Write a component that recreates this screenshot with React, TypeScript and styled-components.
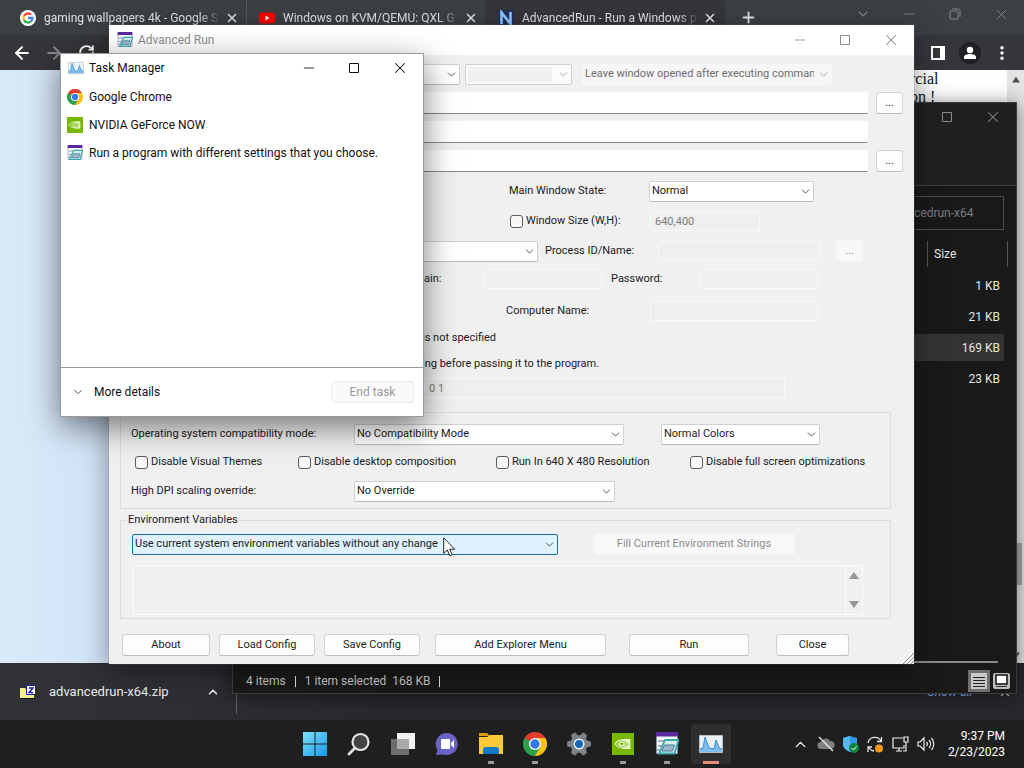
import React from "react";
import styled, { createGlobalStyle, css } from "styled-components";
import { ArrowLeft, ArrowRight, ChevronDown, ChevronUp, Minus, MoreVertical, Plus, RotateCw, X } from "lucide-react";

const ui = `Roboto, "Open Sans", sans-serif`;

const Global = createGlobalStyle`
  * { box-sizing: border-box; }
  body { margin: 0; font-family: ${ui}; font-size: 12px; }
  button, input, select, textarea { font: inherit; color: inherit; margin: 0; }
  button { padding: 0; background: none; border: 0; }
`;

/* ---------- desktop and browser ---------- */
const Desktop = styled.main`
  position: relative;
  display: flex;
  flex-direction: column;
  height: 100vh;
  min-height: 720px;
  overflow: hidden;
  background: #202124;
`;
const Browser = styled.section`
  flex: 1;
  display: flex;
  flex-direction: column;
  color: #dfe1e5;
`;
const TabStrip = styled.div`
  display: flex;
  height: 35px;
  padding-left: 8px;
  background: #3c4043;
`;
const Tab = styled.div<{ $active?: boolean }>`
  display: flex;
  align-items: center;
  flex: 0 1 239px;
  min-width: 0;
  gap: 8px;
  padding: 0 7px 0 12px;
  background: ${(p) => (p.$active ? "#35363a" : "transparent")};
  & + &:nth-child(2) { box-shadow: -1px 0 0 -0px #55585b; }
`;
const TabTitle = styled.span`
  flex: 1;
  margin-right: -5px;
  overflow: hidden;
  white-space: nowrap;
  mask-image: linear-gradient(to right, #000 88%, transparent);
`;
const IconButton = styled.button<{ $w?: number }>`
  display: flex;
  align-items: center;
  justify-content: center;
  flex: none;
  width: ${(p) => p.$w ?? 16}px;
  align-self: stretch;
`;
const Spacer = styled.div`
  flex: 1;
`;
const WindowButtons = styled.div<{ $color: string }>`
  display: flex;
  height: 28px;
  color: ${(p) => p.$color};
`;
const Toolbar = styled.div`
  display: flex;
  height: 35px;
  padding: 0 6px;
  background: #35363a;
  color: #fff;
`;
const Page = styled.div`
  flex: 1;
  display: flex;
  justify-content: flex-end;
  background: linear-gradient(to right, #dbeafa, #cfe1f5 130px, #fff 131px);
`;
const Article = styled.p`
  width: 97px;
  margin: 0;
  color: #111;
  font: 16px/18px "Liberation Serif", serif;
`;
const PageScroll = styled.div`
  display: flex;
  flex-direction: column;
  align-items: center;
  width: 17px;
  padding: 6px 0 4px;
  background: #e4e4e4;
  color: #505050;
`;
const PageThumb = styled.div`
  width: 13px;
  height: 42px;
  margin-top: auto;
  margin-bottom: 66px;
  background: #a8a8a8;
`;
const Shelf = styled.div`
  display: flex;
  align-items: center;
  height: 57px;
  background: linear-gradient(to right, #323338, #27292d 400px);
`;
const Download = styled.button`
  display: flex;
  align-items: center;
  width: 237px;
  height: 44px;
  padding: 0 16px 0 20px;
  gap: 13px;
  border-right: 1px solid #5f6368;
  font-size: 13px;
  color: #e8eaed;
`;
const ShowAll = styled.a`
  margin-right: 14px;
  color: #8ab4f8;
  text-decoration: none;
`;

/* ---------- floating windows ---------- */
const Frame = styled.section`
  position: absolute;
  display: flex;
  flex-direction: column;
`;
const Explorer = styled(Frame)`
  left: 232px;
  top: 102px;
  width: 785px;
  height: 592px;
  background: #191919;
  border: 1px solid #3c3c3c;
  color: #e6e6e6;
  box-shadow: 0 2px 18px rgba(0, 0, 0, 0.5);
`;
const ExplorerTop = styled.div`
  display: flex;
  justify-content: flex-end;
  height: 83px;
  background: #202020;
  border-bottom: 1px solid #3f3f3f;
`;
const SearchBox = styled.input`
  align-self: flex-end;
  width: 130px;
  height: 34px;
  margin: 10px 12px 0 0;
  padding: 0 0 0 39px;
  border: 1px solid #4c4c4c;
  background: #191919;
  &::placeholder { color: #7c7c7c; opacity: 1; }
`;
const Files = styled.table`
  align-self: flex-end;
  width: 111px;
  margin: 11px 8px 0 0;
  border-spacing: 0;
  th {
    height: 26px;
    padding: 0 0 0 6px;
    border: solid #555;
    border-width: 0 1px;
    font-weight: 400;
    text-align: left;
  }
  th:first-child, td:first-child { width: 30px; border: 0; padding: 0; }
  tbody::before { content: ""; display: block; height: 3px; }
  td { height: 31px; padding: 0 8px 0 0; text-align: right; }
`;
const FileRow = styled.tr<{ $on?: boolean }>`
  td { background: ${(p) => (p.$on ? "linear-gradient(#333, #333) 0 2px / 100% 27px no-repeat" : "none")}; }
  td:last-child { background-size: calc(100% - 4px) 27px; }
`;
const ScrollLine = styled.div`
  height: 2px;
  margin: auto 18px 6px 0;
  background: #8a8a8a;
`;
const StatusBar = styled.footer`
  display: flex;
  align-items: center;
  height: 24px;
  padding: 0 6px 0 13px;
  gap: 9px;
  color: #c4c4c4;
`;
const Tick = styled.i`
  width: 1px;
  height: 11px;
  background: #e0e0e0;
`;
const ViewButtons = styled.div`
  display: flex;
  margin-left: auto;
  gap: 3px;
`;
const TitleBar = styled.header<{ $h: number; $color: string }>`
  display: flex;
  align-items: center;
  height: ${(p) => p.$h}px;
  padding-left: 8px;
  gap: 5px;
  background: #fff;
  color: ${(p) => p.$color};
  h2 { flex: 1; margin: 0; font-size: 12px; font-weight: 400; }
`;

/* ---------- Advanced Run dialog ---------- */
const RunWindow = styled(Frame)`
  left: 109px;
  top: 25px;
  width: 805px;
  background: #f0f0f0;
  color: #1a1a1a;
  box-shadow: 0 0 1px #777, 0 6px 26px rgba(0, 0, 0, 0.4);
`;
const Form = styled.form`
  position: relative;
  padding-bottom: 8px;
  font-size: 11px;
  line-height: 14px;
`;
const Row = styled.div<{ $h?: number; $mt?: number; $pl?: number }>`
  display: flex;
  align-items: center;
  height: ${(p) => p.$h ?? 22}px;
  margin-top: ${(p) => p.$mt ?? 7}px;
  padding-left: ${(p) => p.$pl ?? 0}px;
`;
type Slot = { $w?: number; $ml?: number };
const slot = css<Slot>`
  flex: none;
  width: ${(p) => (p.$w ? `${p.$w}px` : "auto")};
  margin-left: ${(p) => p.$ml ?? 0}px;
`;
const Label = styled.label<Slot>`
  ${slot}
  white-space: nowrap;
`;
const Line = styled.span`
  white-space: nowrap;
`;
const Field = styled.input<Slot>`
  ${slot}
  height: 22px;
  padding: 0 4px;
  border: 0;
  border-bottom: 1px solid #868686;
  border-radius: 2px;
  background: #fff;
  &:disabled {
    height: 20px;
    border: 1px solid #f9f9f9;
    background: #efefef;
    color: #7d7d7d;
  }
`;
const Combo = styled.span<Slot & { $off?: boolean; $hot?: boolean }>`
  ${slot}
  display: grid;
  align-items: center;
  height: 21px;
  color: ${(p) => (p.$off ? "#6d6d6d" : "inherit")};
  > * { grid-area: 1 / 1; }
  > svg { justify-self: end; margin-right: 2px; pointer-events: none; color: ${(p) => (p.$off ? "#aaa" : "#555")}; }
  select {
    width: 100%;
    height: 21px;
    padding: 0 17px 0 2px;
    appearance: none;
    border: 1px solid ${(p) => (p.$hot ? "#1c6ea8" : p.$off ? "#f7f7f7" : "#d0d0d0")};
    border-bottom-color: ${(p) => (p.$hot ? "#1c6ea8" : p.$off ? "#f7f7f7" : "#bcbcbc")};
    border-radius: 2px;
    background: ${(p) => (p.$hot ? "#e0f2fd" : p.$off ? "#f6f6f6" : "#fff")};
    opacity: 1;
    color: inherit;
  }
`;
const FramedCombo = styled(Combo)`
  select {
    border-color: #d0d0d0;
    background: linear-gradient(#f0f0f0, #f0f0f0) 2px 2px / calc(100% - 21px) 15px no-repeat, #fbfbfb;
  }
`;
const Check = styled.label<Slot>`
  ${slot}
  display: flex;
  align-items: center;
  gap: 3px;
  white-space: nowrap;
  input {
    width: 13px;
    height: 13px;
    appearance: none;
    border: 1px solid #5c5c5c;
    border-radius: 3px;
    background: #f7f7f7;
  }
`;
const Push = styled.button<Slot>`
  ${slot}
  height: 22px;
  border: 1px solid #d2d2d2;
  border-bottom-color: #bdbdbd;
  border-radius: 3px;
  background: #fdfdfd;
  white-space: nowrap;
  &:disabled { border-color: #f5f5f5; background: #f8f8f8; color: #8c8c8c; }
`;
const Group = styled.fieldset<{ $mt: number; $h: number }>`
  height: ${(p) => p.$h}px;
  margin: ${(p) => p.$mt}px 23px 0 11px;
  padding: 0;
  border: 1px solid #dcdcdc;
  legend { height: 14px; margin-left: 6px; padding: 0 1px; }
`;
const EnvBox = styled.div`
  display: flex;
  width: 730px;
  height: 50px;
  margin: 10px 0 0 12px;
  border: 1px solid #fbfbfb;
  textarea { flex: 1; resize: none; border: 0; background: #efefef; }
`;
const EnvScroll = styled.div`
  display: flex;
  flex-direction: column;
  justify-content: space-between;
  align-items: center;
  width: 17px;
  padding: 5px 0;
  border-left: 1px solid #fbfbfb;
  color: #959595;
`;
const Grip = styled.svg`
  position: absolute;
  right: 0;
  bottom: 0;
`;

/* ---------- Task Manager ---------- */
const TaskWindow = styled(Frame)`
  left: 60px;
  top: 53px;
  width: 364px;
  height: 364px;
  border: 1px solid #9a9a9a;
  background: #fff;
  color: #111;
  box-shadow: 0 10px 30px rgba(0, 0, 0, 0.5);
`;
const TaskTitle = styled(TitleBar)`
  padding-left: 7px;
`;
const AppList = styled.ul`
  flex: 1;
  margin: 0;
  padding: 1px 6px;
  list-style: none;
  li { display: flex; align-items: center; gap: 6px; height: 28px; }
`;
const TaskFooter = styled.footer`
  display: flex;
  align-items: center;
  justify-content: space-between;
  height: 49px;
  padding: 0 9px 0 10px;
  border-top: 1px solid #9b9b9b;
`;
const More = styled.button`
  display: flex;
  align-items: center;
  gap: 9px;
`;
const EndTask = styled.button`
  width: 83px;
  height: 22px;
  border: 1px solid #ececec;
  border-radius: 3px;
  background: #fafafa;
  color: #9a9a9a;
`;

/* ---------- taskbar ---------- */
const Taskbar = styled.nav`
  position: relative;
  display: grid;
  grid-template-columns: 1fr auto 1fr;
  align-items: center;
  height: 48px;
  padding-left: 2px;
  background: #1f1f1f;
  color: #fff;
`;
const Apps = styled.div`
  grid-column: 2;
  display: flex;
  gap: 4px;
`;
const AppButton = styled.button<{ $state?: "open" | "active" }>`
  display: flex;
  align-items: center;
  justify-content: center;
  width: 40px;
  height: 40px;
  border-radius: 4px;
  background: ${(p) =>
    p.$state === "active"
      ? "linear-gradient(#e88a76, #e88a76) 50% 100% / 16px 3px no-repeat, #2f2f2f"
      : p.$state === "open"
        ? "linear-gradient(#9a9a9a, #9a9a9a) 50% 100% / 6px 3px no-repeat"
        : "none"};
`;
const Tray = styled.div`
  display: flex;
  align-items: center;
  justify-content: flex-end;
  gap: 8px;
  padding-right: 19px;
`;
const Clock = styled.time`
  margin-left: 5px;
  line-height: 16px;
  text-align: right;
`;
const Pointer = styled.svg`
  position: absolute;
  left: 443px;
  top: 537px;
`;

/* ---------- drawings ---------- */
const ChromeLogo = ({ s = 16 }: { s?: number }) => (
  <svg width={s} height={s} viewBox="0 0 24 24">
    <path d="M12 12 1.6 6A12 12 0 0 1 22.4 6z" fill="#e33b2e" />
    <path d="M12 12 22.4 6A12 12 0 0 1 12 24z" fill="#fbc116" />
    <path d="M12 12V24A12 12 0 0 1 1.6 6z" fill="#2ba24c" />
    <path d="M12 6h10.4L17.2 15z" fill="#fbc116" />
    <path d="M17.2 15 12 24 6.8 15z" fill="#2ba24c" />
    <path d="M6.8 15 1.6 6 12 6z" fill="#e33b2e" />
    <path d="M6.8 15 1.6 6 7 9z" fill="#2ba24c" />
    <circle cx="12" cy="12" r="6" fill="#fff" />
    <circle cx="12" cy="12" r="4.7" fill="#3578e5" />
  </svg>
);
const NvidiaLogo = ({ s = 15 }: { s?: number }) => (
  <svg width={s} height={s} viewBox="0 0 24 24">
    <path d="M0 0h24v24H0z" fill="#76b900" />
    <path d="M11 6.500h9v11h-9z" fill="#e9f6cf" />
    <path d="M11 8c3.500 0 6 1.500 7.500 4-1.500 2.500-4 4-7.500 4z" fill="#76b900" />
    <path d="M3.500 12c3.500-5.500 10-5.500 13.500 0-3.500 5-10 5-13.500 0z" fill="none" stroke="#e9f6cf" strokeWidth="1.400" />
    <path d="M7 12c2-3 5-3 7 0-2 2.500-5 2.500-7 0z" fill="none" stroke="#e9f6cf" strokeWidth="1.400" />
  </svg>
);
const RunLogo = ({ s = 16 }: { s?: number }) => (
  <svg width={s} height={s} viewBox="0 0 24 24">
    <path d="M1.500 1.500h21v20h-21z" fill="#f7f8fc" stroke="#8a8fa8" />
    <path d="M1 0h22v4.500H1z" fill="#5b2a9e" />
    <path d="M3 9h6M3 14h4M2 18h3" stroke="#8d93a8" strokeWidth="1.400" />
    <path d="M10 8h13.500l-4 13.500H4z" fill="#d6f0f0" stroke="#3fa9b0" strokeWidth="1.800" />
    <path d="M9.500 13h10l-2 6H7z" fill="#9fb6c8" stroke="#3e7f9a" />
  </svg>
);
const TaskLogo = ({ s = 16 }: { s?: number }) => (
  <svg width={s} height={s} viewBox="0 0 24 24">
    <path d="M.5 3.500h23v17H.5z" fill="#eaf2f8" stroke="#b4c0ca" />
    <path d="M1 20v-3l3-1 2-11 3 8 2 4 2-1 2 1 2-9 2 5 2 4 2-1v4z" fill="#7fbcec" />
    <path d="M1 17l3-1 2-11 3 8 2 4 2-1 2 1 2-9 2 5 2 4 2-1" fill="none" stroke="#3a8fd0" />
  </svg>
);
const GoogleLogo = () => (
  <svg width="16" height="16" viewBox="0 0 24 24">
    <circle cx="12" cy="12" r="12" fill="#fff" />
    <g fill="none" strokeWidth="3.400">
      <path d="M16.800 7.200A6.800 6.800 0 0 0 6 8.800" stroke="#ea4335" />
      <path d="M6 8.800a6.800 6.800 0 0 0 0 6.400" stroke="#fbbc05" />
      <path d="M6 15.200a6.800 6.800 0 0 0 10.400 2" stroke="#34a853" />
      <path d="M16.400 17.200A6.800 6.800 0 0 0 18.800 12H12" stroke="#4285f4" />
    </g>
  </svg>
);
const YoutubeLogo = () => (
  <svg width="16" height="16" viewBox="0 0 16 16">
    <rect y="2.500" width="16" height="11" rx="3" fill="#f00" />
    <path d="M6.500 5.500v5l4-2.500z" fill="#fff" />
  </svg>
);
const NirLogo = () => (
  <svg width="16" height="16" viewBox="0 0 16 16">
    <path d="M0 0h16v16H0z" fill="#20305c" />
    <path d="M3.500 14V2.500L12.500 14V2" fill="none" stroke="#8fc7ff" strokeWidth="2.600" />
  </svg>
);
const ZipLogo = () => (
  <svg width="16" height="16" viewBox="0 0 16 16">
    <path d="M0 4h5l1 1h8v9H0z" fill="#f2f08a" />
    <path d="M1 14.500h14" stroke="#111" />
    <path d="M6.500 1.500h9v9h-9z" fill="#fff" stroke="#1c1c9c" />
    <path d="M9 4h4l-4 4.500h4" fill="none" stroke="#1c1c9c" strokeWidth="1.400" />
  </svg>
);
const Triangle = ({ down, s = 10 }: { down?: boolean; s?: number }) => (
  <svg width={s} height={s} viewBox="0 0 10 10">
    <path d={down ? "M0 2h10L5 9z" : "M0 8h10L5 1z"} fill="currentColor" />
  </svg>
);
const Chevron = () => <ChevronDown size={13} strokeWidth={1.8} />;

const Controls = ({ color, first = true }: { color: string; first?: boolean }) => (
  <WindowButtons $color={color}>
    {first && (
      <IconButton type="button" $w={45} aria-label="Minimize"><Minus size={16} strokeWidth={1.3} /></IconButton>
    )}
    <IconButton type="button" $w={46} aria-label="Maximize">
      <svg width="12" height="12" viewBox="0 0 12 12"><path d="M1.500 1.500h9v9h-9z" fill="none" stroke="currentColor" /></svg>
    </IconButton>
    <IconButton type="button" $w={46} aria-label="Close"><X size={18} strokeWidth={1.4} /></IconButton>
  </WindowButtons>
);

type SelectProps = { label: string; text: string; off?: boolean; hot?: boolean; framed?: boolean; w: number; ml?: number };
const Select = ({ label, text, off, hot, framed, w, ml }: SelectProps) => {
  const Box = framed ? FramedCombo : Combo;
  return (
    <Box $w={w} $ml={ml} $off={off} $hot={hot}>
      <select aria-label={label} disabled={off}>
        <option>{text}</option>
      </select>
      <Chevron />
    </Box>
  );
};

const tabs = [
  { title: "gaming wallpapers 4k - Google S", icon: <GoogleLogo /> },
  { title: "Windows on KVM/QEMU: QXL G", icon: <YoutubeLogo /> },
  { title: "AdvancedRun - Run a Windows p", icon: <NirLogo />, active: true },
];

export default function App() {
  return (
    <Desktop>
      <Global />
      <Browser>
        <TabStrip>
          {tabs.map((t) => (
            <Tab key={t.title} $active={t.active}>
              {t.icon}
              <TabTitle>{t.title}</TabTitle>
              <IconButton aria-label="Close tab"><X size={14} strokeWidth={2.6} /></IconButton>
            </Tab>
          ))}
          <IconButton $w={46} aria-label="New tab"><Plus size={17} strokeWidth={2.6} /></IconButton>
          <Spacer />
          <WindowButtons $color="#85888b">
            <IconButton $w={46} aria-label="Search tabs"><ChevronDown size={16} strokeWidth={1.6} /></IconButton>
            <IconButton $w={46} aria-label="Minimize"><Minus size={16} strokeWidth={1.4} /></IconButton>
            <IconButton $w={46} aria-label="Restore">
              <svg width="12" height="12" viewBox="0 0 12 12" fill="none" stroke="currentColor">
                <rect x="1" y="3" width="8" height="8" rx="1" />
                <path d="M3 1h6.500a1.500 1.500 0 0 1 1.500 1.500V9" />
              </svg>
            </IconButton>
            <IconButton $w={46} aria-label="Close"><X size={17} strokeWidth={1.4} /></IconButton>
          </WindowButtons>
        </TabStrip>
        <Toolbar>
          <IconButton $w={32} aria-label="Back"><ArrowLeft size={20} strokeWidth={2.4} /></IconButton>
          <IconButton $w={32} aria-label="Forward"><ArrowRight size={20} strokeWidth={2.4} color="#85878b" /></IconButton>
          <IconButton $w={32} aria-label="Reload"><RotateCw size={17} strokeWidth={2.6} /></IconButton>
          <Spacer />
          <IconButton $w={32} aria-label="Side panel">
            <svg width="14" height="14" viewBox="0 0 14 14"><path d="M1 1h12v12H1z" fill="none" stroke="#fff" strokeWidth="2" /><path d="M9 1h4v12H9z" fill="#fff" /></svg>
          </IconButton>
          <IconButton $w={32} aria-label="Profile">
            <svg width="22" height="22" viewBox="0 0 22 22"><circle cx="11" cy="11" r="11" fill="#202124" /><circle cx="11" cy="8" r="3.200" fill="#fff" /><path d="M5 17v-2c0-2 3-3 6-3s6 1 6 3v2z" fill="#fff" /></svg>
          </IconButton>
          <IconButton $w={32} aria-label="Menu"><MoreVertical size={18} strokeWidth={2.6} /></IconButton>
        </Toolbar>
        <Page>
          <Article>rcial<br />on !</Article>
          <PageScroll>
            <Triangle s={8} />
            <PageThumb />
            <Triangle down s={8} />
          </PageScroll>
        </Page>
        <Shelf>
          <Download>
            <ZipLogo />
            <span>advancedrun-x64.zip</span>
            <Spacer />
            <ChevronUp size={14} strokeWidth={2.8} />
          </Download>
          <Spacer />
          <ShowAll href="#">Show all</ShowAll>
          <IconButton $w={38} aria-label="Close downloads"><X size={14} strokeWidth={2.4} color="#c8c8c8" /></IconButton>
        </Shelf>
      </Browser>

      <Taskbar>
        <Apps>
          <AppButton aria-label="Start">
            <svg width="24" height="24" viewBox="0 0 24 24">
              <defs><linearGradient id="win" x2="1" y2="1"><stop stopColor="#7fe0fb" /><stop offset="1" stopColor="#149be8" /></linearGradient></defs>
              <path d="M0 0h11.500v11.500H0zM12.500 0H24v11.500H12.500zM0 12.500h11.500V24H0zM12.500 12.500H24V24H12.500z" fill="url(#win)" />
            </svg>
          </AppButton>
          <AppButton aria-label="Search">
            <svg width="24" height="24" viewBox="0 0 24 24"><circle cx="13.500" cy="10" r="8" fill="#444" stroke="#e6e6e6" strokeWidth="2.200" /><path d="M8 16l-6 6" stroke="#e6e6e6" strokeWidth="2.800" strokeLinecap="round" /></svg>
          </AppButton>
          <AppButton aria-label="Task view">
            <svg width="24" height="24" viewBox="0 0 24 24"><path d="M6 1h18v16H6z" fill="#f2f2f2" /><path d="M0 7h18v16H0z" fill="#6e6e6e" /><path d="M6 7h12v10H6z" fill="#aaa" /></svg>
          </AppButton>
          <AppButton aria-label="Chat">
            <svg width="24" height="24" viewBox="0 0 24 24"><path d="M12 1a11 11 0 1 1-3.500 21.500L1 23l1.500-5A11 11 0 0 1 12 1z" fill="#6a63c4" /><rect x="6" y="7" width="9" height="10" rx="1" fill="#fff" /><path d="M16 11l3-3v8l-3-3z" fill="#fff" /></svg>
          </AppButton>
          <AppButton $state="open" aria-label="File Explorer">
            <svg width="26" height="24" viewBox="0 0 26 24"><path d="M1 1h8l3 3H1z" fill="#d99a0b" /><path d="M1 5h8l3-2h13v19H1z" fill="#fcc938" /><path d="M5 22v-4a3 3 0 0 1 3-3h10a3 3 0 0 1 3 3v4z" fill="#1478c8" /></svg>
          </AppButton>
          <AppButton $state="open" aria-label="Google Chrome"><ChromeLogo s={24} /></AppButton>
          <AppButton aria-label="Settings">
            <svg width="24" height="24" viewBox="0 0 24 24">
              <g fill="#7d8288">{[0, 60, 120].map((a) => <rect key={a} x="9" y="0" width="6" height="24" rx="2" transform={`rotate(${a + 30} 12 12)`} />)}<circle cx="12" cy="12" r="9" /></g>
              <circle cx="12" cy="12" r="5.500" fill="#e8f1fa" /><circle cx="12" cy="12" r="4" fill="#1769b8" />
            </svg>
          </AppButton>
          <AppButton $state="open" aria-label="GeForce NOW"><NvidiaLogo s={22} /></AppButton>
          <AppButton $state="open" aria-label="Advanced Run"><RunLogo s={24} /></AppButton>
          <AppButton $state="active" aria-label="Task Manager"><TaskLogo s={24} /></AppButton>
        </Apps>
        <Tray>
          <ChevronUp size={17} strokeWidth={1.8} />
          <svg width="18" height="16" viewBox="0 0 18 16"><path d="M4 13a3.500 3.500 0 0 1 0-7 5 5 0 0 1 9-1 4 4 0 0 1 1 8z" fill="#808080" /><path d="M2 1l14 14" stroke="#eee" strokeWidth="1.300" /></svg>
          <svg width="16" height="17" viewBox="0 0 16 17"><path d="M7 0l7 2v6c0 4-3 6-7 8-4-2-7-4-7-8V2z" fill="#2f9be6" /><path d="M7 0v16c-4-2-7-4-7-8V2z" fill="#54b8f5" /><circle cx="11" cy="12" r="5" fill="#12843c" /><path d="M8.500 12l2 2 3-3.500" fill="none" stroke="#fff" /></svg>
          <svg width="17" height="17" viewBox="0 0 17 17" fill="none" stroke="#e8e8e8" strokeWidth="1.300"><path d="M1 7a7 7 0 0 1 13-2M14.500 1v4.500H10M7 15a7 7 0 0 1-5-3M1 16v-5h4" /><circle cx="12" cy="12.500" r="4" fill="#f09a1a" stroke="none" /></svg>
          <svg width="17" height="17" viewBox="0 0 17 17" fill="none" stroke="#eee" strokeWidth="1.200"><path d="M11 2H1v10h11V9M4 15h6M7 12v3M12 1h4v5h-4zM14 6v9h-3" /></svg>
          <svg width="18" height="16" viewBox="0 0 18 16" fill="none" stroke="#eee" strokeWidth="1.200"><path d="M1 6h2l4-4v12l-4-4H1zM9.500 6a3 3 0 0 1 0 4M12 4a6 6 0 0 1 0 8M14.500 2a9 9 0 0 1 0 12" /></svg>
          <Clock>9:37 PM<br />2/23/2023</Clock>
        </Tray>
      </Taskbar>

      <Explorer aria-label="File Explorer">
        <ExplorerTop><Controls color="#8a8a8a" first={false} /></ExplorerTop>
        <SearchBox aria-label="Search" placeholder="cedrun-x64" />
        <Files>
          <thead><tr><th /><th>Size</th></tr></thead>
          <tbody>
            {["1 KB", "21 KB", "169 KB", "23 KB"].map((s, i) => (
              <FileRow key={s} $on={i === 2}><td /><td>{s}</td></FileRow>
            ))}
          </tbody>
        </Files>
        <ScrollLine />
        <StatusBar>
          <span>4 items</span>
          <Tick />
          <span>1 item selected&nbsp; 168 KB</span>
          <Tick />
          <ViewButtons>
            <svg width="22" height="22" viewBox="0 0 22 22"><path d="M0 0h22v22H0z" fill="#707070" /><path d="M3 3h16v16H3z" fill="#c9c9c9" /><path d="M5 7.500h12M5 10.500h12M5 13.500h12M5 16.500h12" stroke="#222" /></svg>
            <svg width="17" height="22" viewBox="0 0 17 22"><rect y="3" width="17" height="16" rx="2" fill="#bdbdbd" /><path d="M3 5h11v9H3z" fill="#fff" stroke="#111" strokeWidth="1.500" /><path d="M3 16.500h11" stroke="#333" /></svg>
          </ViewButtons>
        </StatusBar>
      </Explorer>

      <RunWindow aria-label="Advanced Run">
        <TitleBar $h={30} $color="#8c8c8c">
          <RunLogo />
          <h2>Advanced Run</h2>
          <Controls color="#8a8a8a" />
        </TitleBar>
        <Form>
          <Row $mt={8}>
            <Select label="Run mode" text="" w={338} ml={13} />
            <Select label="Priority" text="" w={107} ml={5} off framed />
            <Select label="Window closing" text="Leave window opened after executing comman" w={250} ml={10} off />
          </Row>
          <Row>
            <Field aria-label="Program to run" $w={746} $ml={13} />
            <Push type="button" $w={27} $ml={8}>...</Push>
          </Row>
          <Row><Field aria-label="Arguments" $w={746} $ml={13} /></Row>
          <Row>
            <Field aria-label="Start directory" $w={746} $ml={13} />
            <Push type="button" $w={27} $ml={8}>...</Push>
          </Row>
          <Row $mt={8} $pl={400}>
            <Label $w={140}>Main Window State:</Label>
            <Select label="Main Window State" text="Normal" w={165} />
          </Row>
          <Row $mt={8} $pl={401}>
            <Check $w={140}><input type="checkbox" />Window Size (W,H):</Check>
            <Field aria-label="Window size" defaultValue="640,400" disabled $w={110} />
          </Row>
          <Row $mt={8}>
            <Select label="Run as" text="" w={299} ml={130} />
            <Label htmlFor="pid" $w={113} $ml={7}>Process ID/Name:</Label>
            <Field id="pid" disabled $w={162} />
            <Push type="button" disabled $w={27} $ml={16}>...</Push>
          </Row>
          <Row $h={20} $pl={315}>
            <Label htmlFor="domain" $w={60}>ain:</Label>
            <Field id="domain" disabled $w={118} />
            <Label htmlFor="pass" $w={89} $ml={9}>Password:</Label>
            <Field id="pass" disabled $w={118} />
          </Row>
          <Row $h={20} $mt={12} $pl={397}>
            <Label htmlFor="host" $w={144}>Computer Name:</Label>
            <Field id="host" disabled $w={168} />
          </Row>
          <Row $h={14} $mt={10} $pl={313}><Line>is not specified</Line></Row>
          <Row $h={14} $mt={12} $pl={313}><Line>ing before passing it to the program.</Line></Row>
          <Row $h={20} $mt={7} $pl={315}><Field aria-label="Affinity" defaultValue="0 1" disabled $w={361} /></Row>
          <Group $mt={7} $h={104}>
            <legend>Compatibility</legend>
            <Row $mt={4} $pl={10}>
              <Label $w={223}>Operating system compatibility mode:</Label>
              <Select label="Operating system compatibility mode" text="No Compatibility Mode" w={270} />
              <Select label="Colors" text="Normal Colors" w={159} ml={37} />
            </Row>
            <Row $mt={6} $pl={14}>
              <Check $w={163}><input type="checkbox" />Disable Visual Themes</Check>
              <Check $w={198}><input type="checkbox" />Disable desktop composition</Check>
              <Check $w={194}><input type="checkbox" />Run In 640 X 480 Resolution</Check>
              <Check><input type="checkbox" />Disable full screen optimizations</Check>
            </Row>
            <Row $pl={10}>
              <Label $w={223}>High DPI scaling override:</Label>
              <Select label="High DPI scaling override" text="No Override" w={261} />
            </Row>
          </Group>
          <Group $mt={4} $h={106}>
            <legend>Environment Variables</legend>
            <Row $mt={6} $pl={11}>
              <Select label="Environment variables" text="Use current system environment variables without any change" w={426} hot />
              <Push type="button" disabled $w={202} $ml={35}>Fill Current Environment Strings</Push>
            </Row>
            <EnvBox>
              <textarea aria-label="Environment strings" disabled />
              <EnvScroll><Triangle /><Triangle down /></EnvScroll>
            </EnvBox>
          </Group>
          <Row $mt={15} $pl={13}>
            <Push type="button" $w={88}>About</Push>
            <Push type="button" $w={96} $ml={9}>Load Config</Push>
            <Push type="button" $w={96} $ml={9}>Save Config</Push>
            <Push type="button" $w={171} $ml={15}>Add Explorer Menu</Push>
            <Push type="button" $w={120} $ml={23}>Run</Push>
            <Push type="button" $w={73} $ml={27}>Close</Push>
          </Row>
          <Grip width="11" height="11" viewBox="0 0 11 11"><path d="M0 11L11 0M4 11l7-7M8 11l3-3" stroke="#8a8a8a" /></Grip>
        </Form>
      </RunWindow>

      <TaskWindow aria-label="Task Manager">
        <TaskTitle $h={28} $color="#111">
          <TaskLogo />
          <h2>Task Manager</h2>
          <Controls color="#111" />
        </TaskTitle>
        <AppList>
          <li><ChromeLogo />Google Chrome</li>
          <li><NvidiaLogo s={16} />NVIDIA GeForce NOW</li>
          <li><RunLogo />Run a program with different settings that you choose.</li>
        </AppList>
        <TaskFooter>
          <More type="button"><ChevronDown size={14} strokeWidth={1.6} color="#555" />More details</More>
          <EndTask type="button" disabled>End task</EndTask>
        </TaskFooter>
      </TaskWindow>

      <Pointer width="13" height="20" viewBox="0 0 13 20"><path d="M.7.8v15.600l3.600-3.400 2.600 5.800 2.300-1-2.500-5.600h5z" fill="#fff" stroke="#222" /></Pointer>
    </Desktop>
  );
}
